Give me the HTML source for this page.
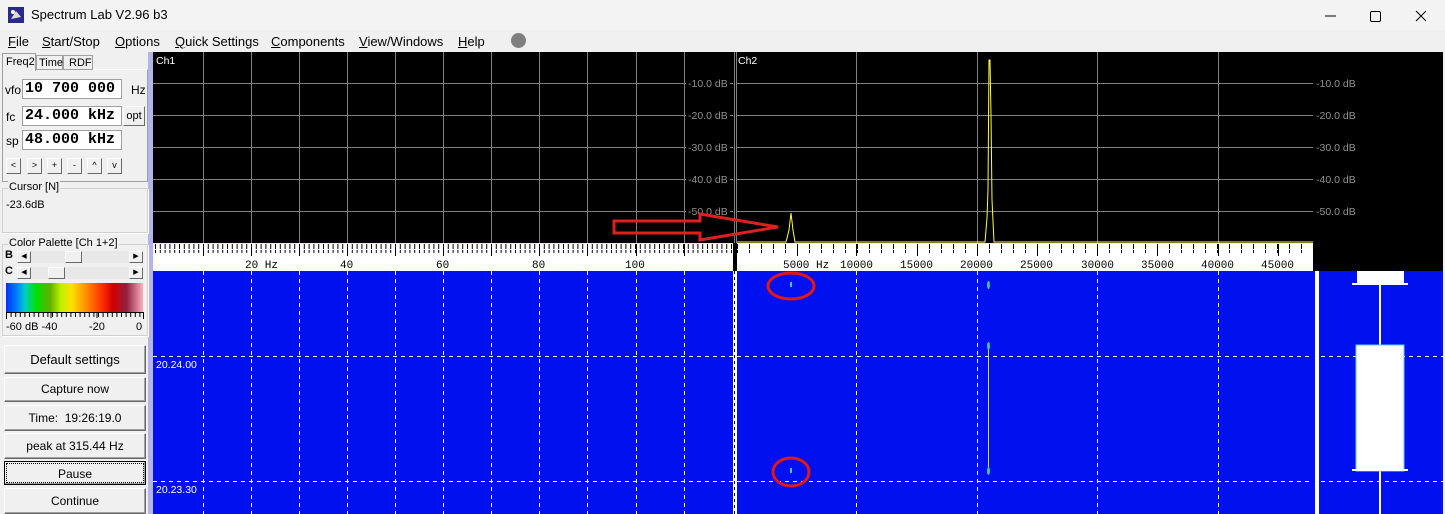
<!DOCTYPE html>
<html><head><meta charset="utf-8"><style>
*{box-sizing:border-box;margin:0;padding:0}
body{width:1445px;height:514px;overflow:hidden;background:#f0f0f0;font-family:"Liberation Sans",sans-serif;position:relative;font-size:12px;color:#000}
.a{position:absolute}
.title{left:0;top:0;width:1445px;height:30px;background:#f3f3f3}
.menu{left:0;top:30px;width:1445px;height:22px;background:#f0f0f0;font-size:13px}
.menu > span{position:absolute;top:4px}
.u{text-decoration:underline}
.btn{position:absolute;left:4px;width:142px;background:#f0f0f0;border:1px solid;border-color:#fff #696969 #696969 #fff;box-shadow:inset -1px -1px 0 #a0a0a0;text-align:center;font-size:12px}
.inp{position:absolute;left:22px;width:100px;height:20px;background:#fff;border:1px solid #a0a0a0;font-family:"Liberation Mono",monospace;font-size:15px;font-weight:bold;padding-left:2px;line-height:18px}
.sb{position:absolute;width:14px;height:14px;border:1px solid;border-color:#fff #696969 #696969 #fff;background:#f0f0f0;font-size:9px;text-align:center;line-height:12px}
.grp{position:absolute;border:1px solid #d0d0d0;box-shadow:1px 1px 0 #fff}
</style></head><body>
<div class="a title">
 <svg class="a" style="left:8px;top:7px" width="16" height="16"><rect width="16" height="16" fill="#2a2a8a"/><path d="M3 12 L8 4 L13 10 Z" fill="#ddd"/><circle cx="5" cy="5" r="2" fill="#fff"/></svg>
 <span class="a" style="left:31px;top:7px;font-size:13px">Spectrum Lab V2.96 b3</span>
 <svg class="a" style="left:1320px;top:8px" width="115" height="16"><line x1="5" y1="8" x2="16" y2="8" stroke="#000"/><rect x="50.5" y="3.5" width="10" height="10" rx="1.5" fill="none" stroke="#000"/><path d="M96 3 L106 13 M106 3 L96 13" stroke="#000"/></svg>
</div>
<div class="a menu">
 <span style="left:8px"><span class="u">F</span>ile</span>
 <span style="left:42px"><span class="u">S</span>tart/Stop</span>
 <span style="left:115px"><span class="u">O</span>ptions</span>
 <span style="left:175px"><span class="u">Q</span>uick Settings</span>
 <span style="left:271px"><span class="u">C</span>omponents</span>
 <span style="left:359px"><span class="u">V</span>iew/Windows</span>
 <span style="left:458px"><span class="u">H</span>elp</span>
 <span style="left:511px;top:3px;width:15px;height:15px;border-radius:50%;background:#7f7f7f"></span>
</div>
<!-- left panel -->
<div class="a" style="left:148px;top:52px;width:5px;height:462px;background:#b4b4e6"></div>
<div class="a" style="left:2px;top:69px;width:146px;height:113px;border:1px solid #a0a0a0;border-top-color:#fff"></div>
<div class="a" style="left:2px;top:53px;width:34px;height:18px;background:#f0f0f0;border:1px solid #a0a0a0;border-bottom:none;font-size:11px;padding:2px 0 0 3px">Freq2</div>
<div class="a" style="left:36px;top:55px;width:27px;height:15px;border:1px solid #a0a0a0;font-size:11px;padding:1px 0 0 2px">Time</div>
<div class="a" style="left:63px;top:55px;width:30px;height:15px;border:1px solid #a0a0a0;font-size:11px;padding:1px 0 0 5px">RDF</div>
<span class="a" style="left:5px;top:83px;font-size:12px">vfo</span><div class="inp" style="top:79px">10 700 000</div><span class="a" style="left:131px;top:83px">Hz</span>
<span class="a" style="left:6px;top:110px">fc</span><div class="inp" style="top:106px">24.000 kHz</div>
<div class="a" style="left:123px;top:106px;width:22px;height:20px;border:1px solid;border-color:#fff #696969 #696969 #fff;font-size:11px;text-align:center;line-height:18px">opt</div>
<span class="a" style="left:6px;top:134px">sp</span><div class="inp" style="top:130px">48.000 kHz</div>
<div class="sb" style="left:6px;top:158px;width:15px;height:16px">&lt;</div>
<div class="sb" style="left:27px;top:158px;width:15px;height:16px">&gt;</div>
<div class="sb" style="left:47px;top:158px;width:15px;height:16px">+</div>
<div class="sb" style="left:67px;top:158px;width:15px;height:16px">-</div>
<div class="sb" style="left:87px;top:158px;width:15px;height:16px">^</div>
<div class="sb" style="left:107px;top:158px;width:15px;height:16px">v</div>
<div class="grp" style="left:2px;top:188px;width:146px;height:45px"></div>
<span class="a" style="left:8px;top:181px;background:#f0f0f0;font-size:11px;padding:0 1px">Cursor [N]</span>
<span class="a" style="left:6px;top:199px;font-size:11px">-23.6dB</span>
<div class="grp" style="left:2px;top:244px;width:146px;height:92px"></div>
<span class="a" style="left:8px;top:237px;background:#f0f0f0;font-size:11px;padding:0 1px">Color Palette [Ch 1+2]</span>
<b class="a" style="left:5px;top:249px;font-size:11px">B</b>
<div class="a" style="left:17px;top:251px;width:126px;height:12px;background:#e8e8e8"></div>
<div class="sb" style="left:17px;top:251px;height:12px;line-height:10px;font-size:7px">◀</div><div class="sb" style="left:129px;top:251px;height:12px;line-height:10px;font-size:7px">▶</div><div class="sb" style="left:65px;top:251px;width:17px;height:12px"></div>
<b class="a" style="left:5px;top:265px;font-size:11px">C</b>
<div class="a" style="left:17px;top:267px;width:126px;height:12px;background:#e8e8e8"></div>
<div class="sb" style="left:17px;top:267px;height:12px;line-height:10px;font-size:7px">◀</div><div class="sb" style="left:129px;top:267px;height:12px;line-height:10px;font-size:7px">▶</div><div class="sb" style="left:48px;top:267px;width:17px;height:12px"></div>
<div class="a" style="left:6px;top:283px;width:137px;height:29px;background:linear-gradient(90deg,#0030ff 0%,#0080ff 8%,#00d0c0 14%,#00e000 22%,#60b000 32%,#c0f000 40%,#ffe000 48%,#ff9000 58%,#ff3000 70%,#d00000 78%,#902040 88%,#ffb0c0 100%)"></div>
<svg class="a" style="left:6px;top:312px" width="138" height="8"><path d="M0.5 0V7M137.5 0V7 M45 0V6 M91 0V6" stroke="#000"/><line x1="0" y1="0.5" x2="138" y2="0.5" stroke="#000"/></svg>
<svg class="a" style="left:6px;top:312px" width="138" height="6"><line x1="0" y1="2.5" x2="138" y2="2.5" stroke="#000" stroke-width="5" stroke-dasharray="1 3.6"/></svg>
<span class="a" style="left:6px;top:321px;font-size:11px">-60 dB -40</span><span class="a" style="left:89px;top:321px;font-size:11px">-20</span><span class="a" style="left:136px;top:321px;font-size:11px">0</span>
<div class="btn" style="top:345px;height:29px;line-height:27px;font-size:13px">Default settings</div>
<div class="btn" style="top:377px;height:25px;line-height:23px">Capture now</div>
<div class="btn" style="top:405px;height:26px;line-height:24px">Time:&nbsp; 19:26:19.0</div>
<div class="btn" style="top:433px;height:26px;line-height:24px">peak at 315.44 Hz</div>
<div class="btn" style="top:461px;height:24px;line-height:20px;border:1px solid #000"><div style="margin:1px;border:1px dotted #000;height:20px">Pause</div></div>
<div class="btn" style="top:488px;height:26px;line-height:24px">Continue</div>

<svg class="a" style="left:0;top:0" width="1445" height="514" font-family="Liberation Sans" >
<defs>
<pattern id="t1" x="155" y="0" width="4.8" height="10" patternUnits="userSpaceOnUse"><rect x="0" y="0" width="1" height="9" fill="#000"/></pattern>
<pattern id="t2" x="737" y="0" width="12" height="10" patternUnits="userSpaceOnUse"><rect x="0" y="0" width="1" height="9" fill="#000"/></pattern>
</defs>
<rect x="153" y="52" width="1290" height="191" fill="#000"/>
<rect x="1313" y="243" width="130" height="28" fill="#000"/>
<g stroke="#808080" stroke-width="1">
<path d="M203.5 52V243M251.5 52V243M299.5 52V243M347.5 52V243M395.5 52V243M443.5 52V243M491.5 52V243M539.5 52V243M587.5 52V243M636.5 52V243M684.5 52V243"/>
<path d="M153 83.5H733M153 115.5H733M153 147.5H733M153 179.5H733M153 211.5H733"/>
<path d="M736.5 52V243M856.5 52V243M977.5 52V243M1097.5 52V243M1218.5 52V243"/>
<path d="M737 83.5H1313M737 115.5H1313M737 147.5H1313M737 179.5H1313M737 211.5H1313"/>
</g>
<path d="M734.5 52V243" stroke="#808080"/>
<g fill="#000" font-size="10.5">
<rect x="686" y="77" width="44" height="12"/><rect x="686" y="109" width="44" height="12"/><rect x="686" y="141" width="44" height="12"/><rect x="686" y="173" width="44" height="12"/><rect x="686" y="205" width="44" height="12"/>
<rect x="1315" y="77" width="44" height="12"/><rect x="1315" y="109" width="44" height="12"/><rect x="1315" y="141" width="44" height="12"/><rect x="1315" y="173" width="44" height="12"/><rect x="1315" y="205" width="44" height="12"/>
</g>
<g fill="#909090" font-size="10.5">
<text x="688" y="87">-10.0 dB</text><text x="688" y="119">-20.0 dB</text><text x="688" y="151">-30.0 dB</text><text x="688" y="183">-40.0 dB</text><text x="688" y="215">-50.0 dB</text>
<text x="1316" y="87">-10.0 dB</text><text x="1316" y="119">-20.0 dB</text><text x="1316" y="151">-30.0 dB</text><text x="1316" y="183">-40.0 dB</text><text x="1316" y="215">-50.0 dB</text>
</g>
<text x="156" y="64" fill="#fff" font-size="10.5">Ch1</text>
<text x="738" y="64" fill="#fff" font-size="10.5">Ch2</text>
<path d="M737 242H786L789 230L791 213L793 230L795 242H985L987 218L988 190L989 60L990 60L991 115L992 200L994 242H1313" fill="none" stroke="#ffff40" stroke-width="1"/>
<path d="M614 221H700V214L778 227L700 240V233H614Z" fill="none" stroke="#e02020" stroke-width="3"/>
<rect x="153" y="243" width="581" height="28" fill="#fff"/>
<rect x="737" y="243" width="576" height="28" fill="#fff"/>
<line x1="153" y1="243.5" x2="1313" y2="243.5" stroke="#ffff80"/>
<rect x="153" y="244" width="581" height="9" fill="url(#t1)"/>
<rect x="737" y="244" width="576" height="9" fill="url(#t2)"/>
<g stroke="#000"><path d="M203.5 244V256M251.5 244V256M299.5 244V256M347.5 244V256M395.5 244V256M443.5 244V256M491.5 244V256M539.5 244V256M587.5 244V256M636.5 244V256M684.5 244V256"/>
<path d="M797.5 244V256M856.5 244V256M917.5 244V256M977.5 244V256M1037.5 244V256M1097.5 244V256M1157.5 244V256M1218.5 244V256M1278.5 244V256"/></g>
<rect x="733" y="243" width="4" height="28" fill="#000"/>
<g font-family="Liberation Mono" font-size="11" fill="#000">
<text x="245" y="268">20 Hz</text><text x="340" y="268">40</text><text x="436" y="268">60</text><text x="532" y="268">80</text><text x="625" y="268">100</text>
<text x="783" y="268">5000 Hz</text><text x="840" y="268">10000</text><text x="900" y="268">15000</text><text x="960" y="268">20000</text><text x="1020" y="268">25000</text><text x="1081" y="268">30000</text><text x="1141" y="268">35000</text><text x="1201" y="268">40000</text><text x="1261" y="268">45000</text>
</g>
<rect x="153" y="271" width="1290" height="243" fill="#0010ee"/>
<rect x="733" y="271" width="4" height="243" fill="#fff"/>
<path d="M734.5 271V514" stroke="#000" stroke-dasharray="3 3"/>
<g stroke="#fff" stroke-dasharray="4 4" stroke-width="1">
<path d="M203.5 271V514M251.5 271V514M299.5 271V514M347.5 271V514M395.5 271V514M443.5 271V514M491.5 271V514M539.5 271V514M587.5 271V514M636.5 271V514M684.5 271V514"/>
<path d="M856.5 271V514M977.5 271V514M1097.5 271V514M1218.5 271V514"/>
<path d="M153 356.5H1443M153 481.5H1443"/>
</g>
<rect x="154" y="358" width="44" height="12" fill="#0010ee"/><rect x="154" y="483" width="44" height="12" fill="#0010ee"/>
<text x="156" y="368" fill="#fff" font-size="10.5">20.24.00</text>
<text x="156" y="493" fill="#fff" font-size="10.5">20.23.30</text>
<path d="M988.5 348V470" stroke="#d0d0ff"/>
<g fill="#40c0a0"><ellipse cx="988.5" cy="285" rx="1.5" ry="4"/><ellipse cx="988.5" cy="346" rx="1.5" ry="4"/><ellipse cx="988.5" cy="471" rx="1.5" ry="4"/></g>
<g fill="#40c0ff"><rect x="790" y="282" width="2" height="5"/><rect x="790" y="468" width="2" height="5"/></g>
<g fill="none" stroke="#e01818" stroke-width="3"><ellipse cx="791" cy="286" rx="23" ry="13"/><ellipse cx="791" cy="472" rx="18" ry="14"/></g>
<rect x="1313" y="271" width="3" height="243" fill="#0010ee"/>
<rect x="1315" y="271" width="4" height="243" fill="#fff"/>
<rect x="1379" y="284" width="2" height="230" fill="#fff"/>
<rect x="1357" y="271" width="47" height="13" fill="#fff"/>
<rect x="1352" y="283" width="56" height="2" fill="#fff"/>
<rect x="1356" y="345" width="48" height="126" fill="#fff" stroke="#60d0ff"/>
<rect x="1352" y="469" width="56" height="2" fill="#fff"/>
<rect x="1443" y="52" width="2" height="462" fill="#f0f0f0"/>
</svg>
</body></html>
